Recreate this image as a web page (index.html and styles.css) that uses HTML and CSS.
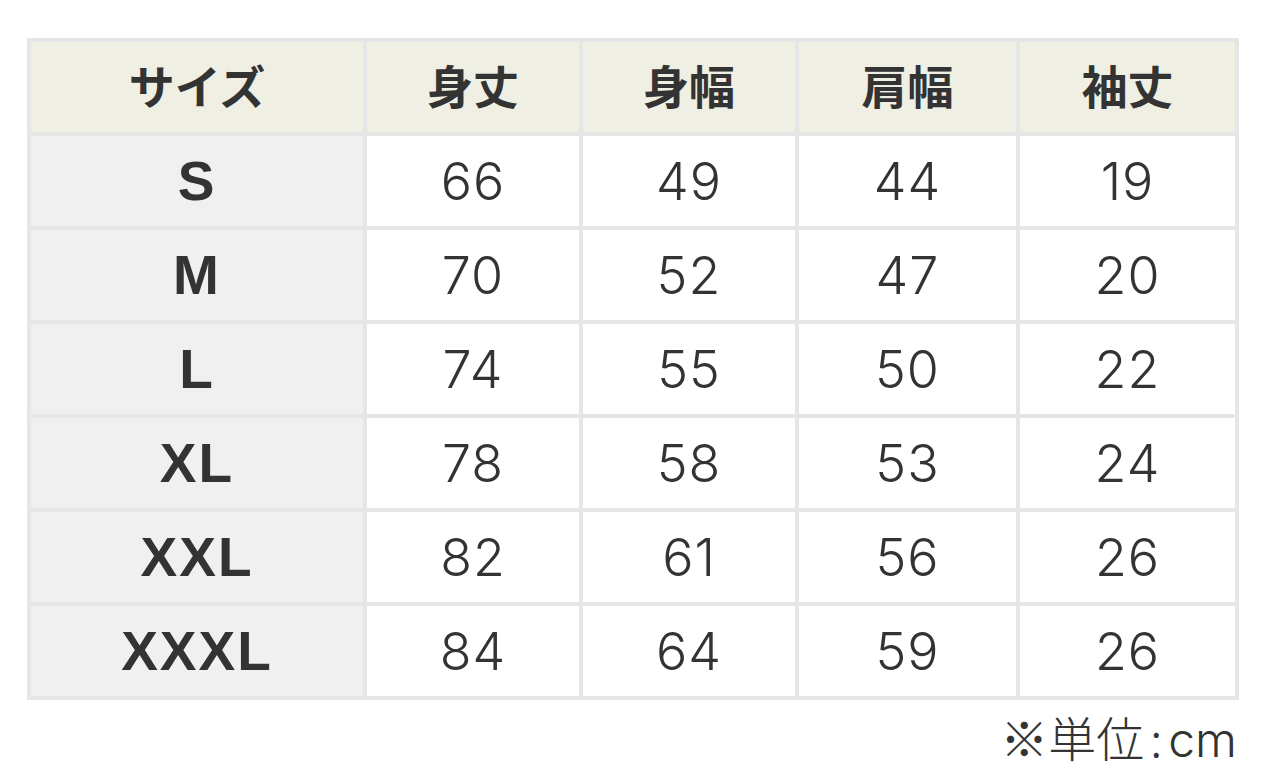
FILE: index.html
```html
<!DOCTYPE html>
<html lang="ja">
<head>
<meta charset="utf-8">
<title>サイズ表</title>
<link rel="stylesheet" href="styles.css">
</head>
<body>
<div class="wrap">
  <div class="table">
    <div class="cell head">サイズ</div>
    <div class="cell head">身丈</div>
    <div class="cell head">身幅</div>
    <div class="cell head">肩幅</div>
    <div class="cell head">袖丈</div>

    <div class="cell size">S</div><div class="cell num">66</div><div class="cell num">49</div><div class="cell num">44</div><div class="cell num">19</div>
    <div class="cell size">M</div><div class="cell num">70</div><div class="cell num">52</div><div class="cell num">47</div><div class="cell num">20</div>
    <div class="cell size">L</div><div class="cell num">74</div><div class="cell num">55</div><div class="cell num">50</div><div class="cell num">22</div>
    <div class="cell size">XL</div><div class="cell num">78</div><div class="cell num">58</div><div class="cell num">53</div><div class="cell num">24</div>
    <div class="cell size">XXL</div><div class="cell num">82</div><div class="cell num">61</div><div class="cell num">56</div><div class="cell num">26</div>
    <div class="cell size">XXXL</div><div class="cell num">84</div><div class="cell num">64</div><div class="cell num">59</div><div class="cell num">26</div>
  </div>
  <div class="note">※単位<span class="colon">:</span><span class="unit">cm</span></div>
</div>
</body>
</html>
```
FILE: styles.css
```css
html, body {
  margin: 0;
  padding: 0;
  background: #ffffff;
}
body {
  font-family: "Liberation Sans", "Noto Sans CJK JP", sans-serif;
  color: #333333;
}
.wrap {
  padding: 38px 0 0 27px;
  width: 1212px;
}
.table {
  display: grid;
  grid-template-columns: 332px 212px 212px 217px 215px;
  grid-auto-rows: 90px;
  gap: 4px;
  padding: 4px;
  background: #e6e6e6;
}
.cell {
  display: flex;
  align-items: center;
  justify-content: center;
  background: #ffffff;
}
.head {
  background: #efefe3;
  font-family: "Noto Sans CJK JP", sans-serif;
  font-weight: 700;
  font-size: 46px;
  padding-bottom: 6px;
  box-sizing: border-box;
}
.size {
  background: #f0f0f0;
  font-weight: 700;
  font-size: 55px;
  letter-spacing: 2px;
}
.num {
  font-family: "Inter", "Liberation Sans", sans-serif;
  font-size: 52px;
  font-weight: 300;
  letter-spacing: 1px;
}
.note {
  text-align: right;
  font-family: "Noto Sans CJK JP", sans-serif;
  font-weight: 300;
  font-size: 48px;
  line-height: 1;
  margin-top: 12px;
  margin-right: 2px;
}
.colon {
  margin: 0 6px;
}
.unit {
  font-family: "Inter", "Liberation Sans", sans-serif;
  font-weight: 300;
}
```
